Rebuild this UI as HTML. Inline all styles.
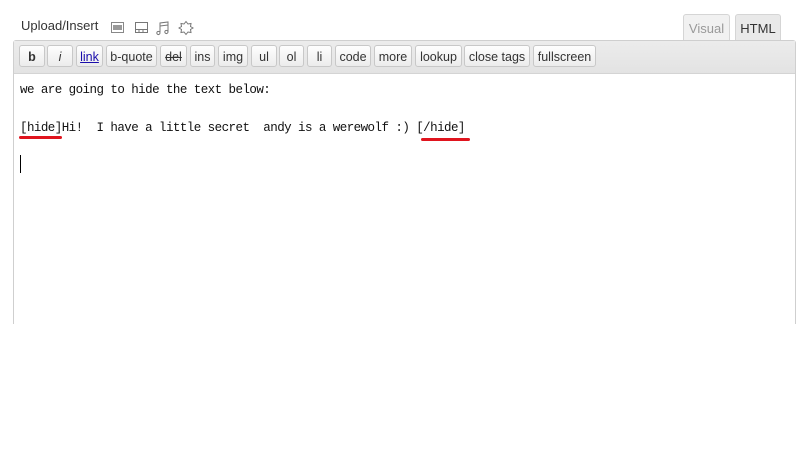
<!DOCTYPE html>
<html><head><style>
body{margin:0;width:804px;height:460px;background:#fff;position:relative;overflow:hidden;font-family:"Liberation Sans",Arial,sans-serif}
.ab{position:absolute}
.btn{position:absolute;top:45px;height:22px;border:1px solid #c8c8c8;border-radius:3px;background:linear-gradient(#fefefe,#ececec);font-size:12.5px;color:#333;text-align:center;line-height:22px;box-sizing:border-box}
.tab{position:absolute;top:14px;height:27px;border:1px solid #d5d5d5;border-bottom:none;border-radius:3px 3px 0 0;font-size:13px;line-height:27px;text-align:center;box-sizing:border-box}
.mono{font-family:"Liberation Mono",monospace;font-size:12.5px;letter-spacing:-0.55px;color:#111;position:absolute;left:20px;white-space:pre}
.ul{position:absolute;height:3px;background:#e0141e;border-radius:2px}
</style></head><body>
<div class="ab" style="left:21px;top:18px;font-size:13px;color:#333">Upload/Insert</div>
<svg class="ab" style="left:108px;top:18px" width="90" height="18" viewBox="0 0 90 18">
<rect x="3.5" y="4.5" width="12" height="10" fill="#fff" stroke="#888"/><rect x="5" y="7" width="9" height="5" fill="#999"/>
<rect x="27.5" y="4.5" width="12" height="10" fill="#fff" stroke="#777"/><line x1="27" y1="11.5" x2="40" y2="11.5" stroke="#777"/><line x1="31" y1="11" x2="31" y2="15" stroke="#777"/><line x1="35" y1="11" x2="35" y2="15" stroke="#777"/>
<path d="M52 15 a1.6 1.6 0 1 1 0-.1 V5 L60 4 V14 M52 8 L60 7 M60 14 a1.6 1.6 0 1 1 0-.1" fill="none" stroke="#777"/>
<path d="M78 3.5 L80 6 83 5.5 82.5 8.5 85 10 82.5 11.5 83 14.5 80 14 78 16.5 76 14 73 14.5 73.5 11.5 71 10 73.5 8.5 73 5.5 76 6Z" fill="#fff" stroke="#777"/>
</svg>
<div class="tab" style="left:683px;width:47px;background:#f1f1f1;color:#999">Visual</div>
<div class="tab" style="left:735px;width:46px;background:#e9e9e9;color:#333">HTML</div>
<div class="ab" style="left:13px;top:40px;width:783px;height:284px;border:1px solid #cfcfcf;border-bottom:none;box-sizing:border-box;border-radius:3px 3px 0 0;background:#fff"></div>
<div class="ab" style="left:14px;top:41px;width:781px;height:32px;background:linear-gradient(#ececec,#e3e3e3);border-bottom:1px solid #d4d4d4"></div>
<div class="btn" style="left:19px;width:26px;font-weight:bold">b</div>
<div class="btn" style="left:47px;width:26px;font-style:italic">i</div>
<div class="btn" style="left:76px;width:27px;text-decoration:underline;color:#1a0dab">link</div>
<div class="btn" style="left:106px;width:51px">b-quote</div>
<div class="btn" style="left:160px;width:27px;text-decoration:line-through">del</div>
<div class="btn" style="left:190px;width:25px">ins</div>
<div class="btn" style="left:218px;width:30px">img</div>
<div class="btn" style="left:251px;width:26px">ul</div>
<div class="btn" style="left:279px;width:25px">ol</div>
<div class="btn" style="left:307px;width:25px">li</div>
<div class="btn" style="left:335px;width:36px">code</div>
<div class="btn" style="left:374px;width:38px">more</div>
<div class="btn" style="left:415px;width:47px">lookup</div>
<div class="btn" style="left:464px;width:66px">close tags</div>
<div class="btn" style="left:533px;width:63px">fullscreen</div>
<div class="mono" style="top:83px">we are going to hide the text below:</div>
<div class="mono" style="top:121px">[hide]Hi!  I have a little secret  andy is a werewolf :) [/hide]</div>
<div class="ul" style="left:19px;top:136px;width:43px"></div>
<div class="ul" style="left:421px;top:138px;width:49px"></div>
<div class="ab" style="left:20px;top:155px;width:1px;height:18px;background:#000"></div>
</body></html>
